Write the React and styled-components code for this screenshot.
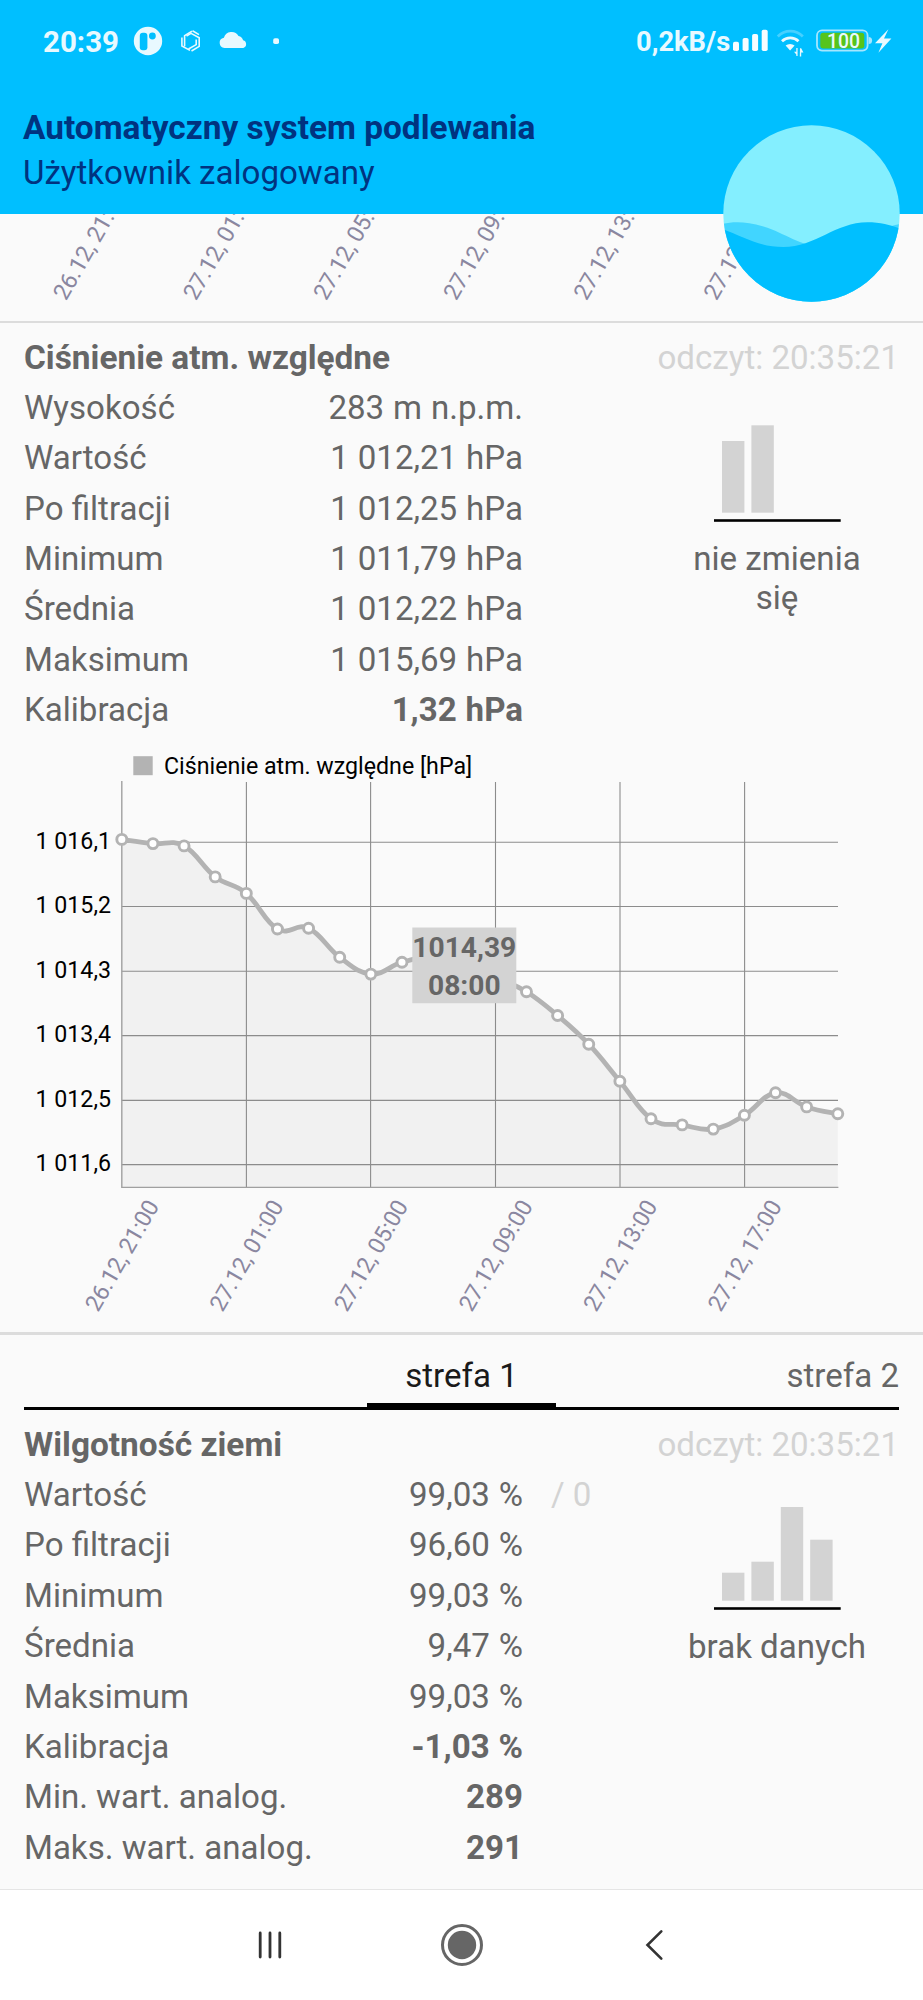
import React from 'react'
import styled, { createGlobalStyle } from 'styled-components'

const GlobalStyle = createGlobalStyle`
* { box-sizing: border-box; }
body {
  margin: 0;
  background-color: #fafafa;
  font-family: Roboto, "Liberation Sans", sans-serif;
}
`;

const Screen = styled.div`
width: 923px;
height: 2000px;
display: flex;
flex-direction: column;
overflow: hidden;
background-color: #fafafa;
color: #666;
font-size: 33.1px;
`;

const Header = styled.header`
position: relative;
z-index: 1;
height: 213.5px;
flex: none;
background-color: #00bfff;
color: #003380;
`;

const StatusBar = styled.div`
height: 82px;
padding: 0 31px 0 43px;
display: flex;
align-items: center;
justify-content: space-between;
color: #e8f9ff;
font-weight: 700;
`;

const StatusGroup = styled.div`
display: flex;
align-items: center;
`;

const StatusText = styled.span`
padding-top: 2px;
font-size: ${(props) => props.$size};
width: ${(props) => props.$width};
line-height: 32px;
white-space: nowrap;
`;

const HeaderTexts = styled.div`
padding: 23px 23px 0;
`;

const AppTitle = styled.h1`
margin: 0;
font-size: 33.4px;
line-height: 45px;
font-weight: 700;
`;

const UserState = styled.div`
line-height: 45px;
`;

const WaterBadge = styled.svg`
position: absolute;
right: 23px;
top: 125px;
z-index: 2;
`;

const AxisStrip = styled.svg`
flex: none;
display: block;
overflow: visible;
`;

const Divider = styled.hr`
flex: none;
width: 100%;
height: 2.5px;
margin: 0;
border: none;
background-color: #dcdcdc;
`;

const Section = styled.section`
flex: none;
padding: 9.5px 24px 0.5px;
`;

const SectionHead = styled.div`
display: flex;
justify-content: space-between;
height: 50.4px;
line-height: 50.4px;
`;

const SectionTitle = styled.h2`
margin: 0;
font-size: 33.4px;
font-weight: 700;
`;

const ReadTime = styled.span`
color: #d3d3d3;
`;

const SectionBody = styled.div`
display: flex;
justify-content: space-between;
`;

const List = styled.div`
flex: none;
width: 580px;
`;

const Row = styled.div`
display: grid;
grid-template-columns: 240px 259px 1fr;
height: 50.4px;
line-height: 50.4px;
white-space: nowrap;
`;

const Value = styled.span`
text-align: right;
word-spacing: 0.7px;
font-weight: ${(props) => props.$bold ? "700" : "400"};
`;

const Extra = styled.span`
padding-left: 28px;
color: #d3d3d3;
`;

const Trend = styled.div`
width: 200px;
margin-right: 22px;
padding-top: 36.5px;
display: flex;
flex-direction: column;
align-items: center;
text-align: center;
line-height: 38.6px;
`;

const TrendIcon = styled.svg`
display: block;
margin-bottom: 18px;
`;

const Chart = styled.svg`
flex: none;
display: block;
`;

const Tabs = styled.nav`
flex: none;
height: 75.5px;
margin: 0 24px;
display: grid;
grid-template-columns: 1fr 189px 1fr;
border-bottom: 3px solid #000;
line-height: 82px;
`;

const Tab = styled.div`
height: 73.5px;
text-align: ${(props) => props.$active ? "center" : "right"};
color: ${(props) => props.$active ? "#1a1a1a" : "#666"};
border-bottom: ${(props) => props.$active ? "5px solid #000" : "none"};
`;

const NavBar = styled.footer`
flex: none;
height: 111px;
margin-top: auto;
border-top: 1px solid #e5e5e5;
background-color: #fff;
display: flex;
justify-content: center;
align-items: center;
gap: 148px;
`;

const pressureRows = [
  { label: "Wysokość", value: "283 m n.p.m." },
  { label: "Wartość", value: "1 012,21 hPa" },
  { label: "Po filtracji", value: "1 012,25 hPa" },
  { label: "Minimum", value: "1 011,79 hPa" },
  { label: "Średnia", value: "1 012,22 hPa" },
  { label: "Maksimum", value: "1 015,69 hPa" },
  { label: "Kalibracja", value: "1,32 hPa", bold: true },
]

const soilRows = [
  { label: "Wartość", value: "99,03 %", extra: "/ 0" },
  { label: "Po filtracji", value: "96,60 %" },
  { label: "Minimum", value: "99,03 %" },
  { label: "Średnia", value: "9,47 %" },
  { label: "Maksimum", value: "99,03 %" },
  { label: "Kalibracja", value: "-1,03 %", bold: true },
  { label: "Min. wart. analog.", value: "289", bold: true },
  { label: "Maks. wart. analog.", value: "291", bold: true },
]

const times = ["26.12, 21:00", "27.12, 01:00", "27.12, 05:00", "27.12, 09:00", "27.12, 13:00", "27.12, 17:00"]

// y position of every hourly reading
const readings = [
  839.4, 843.6, 845.9, 876.9, 893.4, 929, 928.2, 957.3, 974.1, 962.3, 957, 964.9,
  977, 991.7, 1015.5, 1044.2, 1081.3, 1118.8, 1124.9, 1129.1, 1115.3, 1092.8, 1106.9, 1113.8,
]
const points = readings.map((y, i) => [121.8 + i * 31.13, y])

function curve(pts) {
  let d = `M${pts[0][0]},${pts[0][1]}`
  for (let i = 1; i < pts.length; i++) {
    const before = pts[Math.max(i - 2, 0)]
    const prev = pts[i - 1]
    const cur = pts[i]
    const next = pts[Math.min(i + 1, pts.length - 1)]
    const c1 = [prev[0] + (cur[0] - before[0]) * 0.2, prev[1] + (cur[1] - before[1]) * 0.2]
    const c2 = [cur[0] - (next[0] - prev[0]) * 0.2, cur[1] - (next[1] - prev[1]) * 0.2]
    d += ` C${c1} ${c2} ${cur}`
  }
  return d
}

function TimeLabels({ x, y, step }) {
  return times.map((time, i) => (
    <text key={time} transform={`translate(${x + i * step} ${y}) rotate(-60)`} fontSize="23.2" letterSpacing="-0.25" fill="#8a87a0">{time}</text>
  ))
}

function PressureChart() {
  const line = curve(points)
  return (
    <Chart width="923" height="596" viewBox="0 736 923 596">
      <path d={`${line} L837.8,1187.3 L121.8,1187.3 Z`} fill="#f1f1f1" />
      {[842.3, 906.5, 971.3, 1035.6, 1100.4, 1164.6].map((y, i) => (
        <g key={y}>
          <line x1="121.8" x2="838" y1={y} y2={y} stroke="#8c8c8c" strokeWidth="1.1" />
          <text x="111" y={y + 6.6} textAnchor="end" fontSize="23.2" fill="#000">
            {["1 016,1", "1 015,2", "1 014,3", "1 013,4", "1 012,5", "1 011,6"][i]}
          </text>
        </g>
      ))}
      {[246.4, 370.6, 495.5, 620, 744.6].map((x) => (
        <line key={x} x1={x} x2={x} y1="782" y2="1187.3" stroke="#8c8c8c" strokeWidth="1.1" />
      ))}
      <path d="M121.8,781V1187.4H838.4" fill="none" stroke="#a0a0a0" strokeWidth="1.4" />
      <path d={line} fill="none" stroke="#b3b3b3" strokeWidth="4.8" />
      {points.map(([x, y]) => (
        <circle key={x} cx={x} cy={y} r="5" fill="#fff" stroke="#b3b3b3" strokeWidth="2.9" />
      ))}
      <rect x="133.3" y="756.2" width="19.4" height="19" fill="#b3b3b3" />
      <text x="164" y="774.4" fontSize="23.2" fill="#000">Ciśnienie atm. względne [hPa]</text>
      <rect x="412.3" y="927.5" width="104" height="75.7" fill="#d3d3d3" />
      <g fontSize="28.2" fontWeight="700" fill="#666" textAnchor="middle">
        <text x="464.3" y="957.3">1014,39</text>
        <text x="464.3" y="994.8">08:00</text>
      </g>
      <TimeLabels x={98} y={1313} step={124.55} />
    </Chart>
  )
}

function TrendBars({ bars }) {
  return (
    <TrendIcon width="127" height="103" viewBox="0 0 127 103">
      {bars.map((h, i) => (
        <rect key={i} x={8 + i * 29.4} y={93.7 - h} width="22.4" height={h} fill="#d3d3d3" />
      ))}
      <rect x="0" y="100.2" width="126.7" height="2.6" fill="#000" />
    </TrendIcon>
  )
}

function Rows({ items }) {
  return (
    <List>
      {items.map((item) => (
        <Row key={item.label}>
          <span>{item.label}</span>
          <Value $bold={item.bold}>{item.value}</Value>
          {item.extra && <Extra>{item.extra}</Extra>}
        </Row>
      ))}
    </List>
  )
}

function LeftIcons() {
  return (
    <svg width="160" height="40" viewBox="125 21 160 40" fill="#e8f9ff">
      <circle cx="148" cy="41" r="14.2" />
      <rect x="139.8" y="32.8" width="7.6" height="17.4" rx="3" fill="#00bfff" />
      <circle cx="152.4" cy="36" r="3.4" fill="#00bfff" />
      <g fill="none" stroke="#e8f9ff" strokeWidth="1.6">
        <path d="M192,31.2L184.6,35.6V46.2 M181.9,37.5V46L190,50.4" />
        <path d="M186.5,36L191,33.4L199.2,37.8V46.4L191.5,51 M192.5,30.8L199,34.6 M196.2,39.5V44.6L188.5,49" />
      </g>
      <path d="M224.5,48a5.2,5.2 0 0 1 -.6,-10.3a8,8 0 0 1 14.6,-1.8a6,6 0 0 1 4.6,4.4a4,4 0 0 1 .2,7.7Z" />
      <rect x="273.2" y="38.2" width="5.8" height="5.8" rx="1.8" />
    </svg>
  )
}

function RightIcons() {
  return (
    <svg width="162" height="40" viewBox="730 21 162 40" fill="#e8f9ff">
      <g fill="#f8fdff">
        <rect x="733" y="41.7" width="6" height="9.3" rx="1.8" />
        <rect x="742.6" y="38" width="6" height="13" rx="1.8" />
        <rect x="752.1" y="34" width="6" height="17" rx="1.8" />
        <rect x="761.7" y="29.7" width="6" height="21.3" rx="1.8" />
      </g>
      <g fill="none" stroke="#e8f9ff" strokeWidth="2.8">
        <path d="M777.8,36.4a17.5,17.5 0 0 1 25,0" opacity="0.3" />
        <path d="M782,41.2a12,12 0 0 1 16.5,0" />
      </g>
      <path d="M785.6,45.6a7,7 0 0 1 9,0L790.1,50.6Z" />
      <path d="M797.6,48V56H796.3V54.5L794,51.8H796.3V48Z M800,48.2H801.2L803.4,52.4H801.2V56.4H799.8Z" />
      <rect x="817" y="30.4" width="50.6" height="20.2" rx="5" fill="none" stroke="#a5e6ff" strokeWidth="1.8" />
      <path d="M868.6,37a3.4,3.4 0 0 1 0,7Z" fill="#a5e6ff" />
      <rect x="820.3" y="32.8" width="44" height="15.6" rx="3" fill="#56c41b" />
      <text x="843.5" y="47.6" textAnchor="middle" fontSize="19.4" fontWeight="500">100</text>
      <path d="M888.4,29.3L875,43.2H882.4L878.4,52.7L891.4,38.6H884Z" />
    </svg>
  )
}

function App() {
  return (
    <Screen>
      <GlobalStyle />
      <Header>
        <StatusBar>
          <StatusGroup>
            <StatusText $size="29.5px" $width="82px">20:39</StatusText>
            <LeftIcons />
          </StatusGroup>
          <StatusGroup>
            <StatusText $size="27.3px" $width="94px">0,2kB/s</StatusText>
            <RightIcons />
          </StatusGroup>
        </StatusBar>
        <HeaderTexts>
          <AppTitle>Automatyczny system podlewania</AppTitle>
          <UserState>Użytkownik zalogowany</UserState>
        </HeaderTexts>
        <WaterBadge width="177" height="177" viewBox="722.6 125 177 177">
          <clipPath id="badge">
            <circle cx="811.1" cy="213.5" r="88.2" />
          </clipPath>
          <g clipPath="url(#badge)">
            <rect x="722" y="125" width="178" height="178" fill="#84efff" />
            <path d="M722,224C732,221.5 745,221 763,226.5C785,233 800,247 825,247C850,247 875,228 900,224V303H722Z" fill="#41d5ff" />
            <path d="M722,229C742,236 758,247 783,247C815,247 835,222.2 867,222.2C880,222.2 890,225 900,228.7V303H722Z" fill="#00bfff" />
          </g>
        </WaterBadge>
      </Header>
      <AxisStrip width="923" height="107" viewBox="0 213.5 923 107">
        <TimeLabels x={66} y={301} step={130.1} />
      </AxisStrip>
      <Divider />
      <Section>
        <SectionHead>
          <SectionTitle>Ciśnienie atm. względne</SectionTitle>
          <ReadTime>odczyt: 20:35:21</ReadTime>
        </SectionHead>
        <SectionBody>
          <Rows items={pressureRows} />
          <Trend>
            <TrendBars bars={[71.7, 87.4]} />
            nie zmienia się
          </Trend>
        </SectionBody>
      </Section>
      <PressureChart />
      <Divider />
      <Tabs>
        <span />
        <Tab $active>strefa 1</Tab>
        <Tab>strefa 2</Tab>
      </Tabs>
      <Section>
        <SectionHead>
          <SectionTitle>Wilgotność ziemi</SectionTitle>
          <ReadTime>odczyt: 20:35:21</ReadTime>
        </SectionHead>
        <SectionBody>
          <Rows items={soilRows} />
          <Trend>
            <TrendBars bars={[28, 39, 94, 61]} />
            brak danych
          </Trend>
        </SectionBody>
      </Section>
      <NavBar>
        <svg width="44" height="44" viewBox="0 0 44 44" stroke="#333" strokeWidth="2.8" strokeLinecap="round">
          <path d="M12.2,10V34 M22,10V34 M31.8,10V34" />
        </svg>
        <svg width="44" height="44" viewBox="0 0 44 44">
          <circle cx="22" cy="22" r="19.5" fill="none" stroke="#666" strokeWidth="3" />
          <circle cx="22" cy="22" r="14.2" fill="#666" />
        </svg>
        <svg width="44" height="44" viewBox="0 0 44 44" fill="none" stroke="#333" strokeWidth="2.6" strokeLinecap="round">
          <path d="M29.3,8.4L15.5,22L29.3,35.6" />
        </svg>
      </NavBar>
    </Screen>
  )
}

export default App
